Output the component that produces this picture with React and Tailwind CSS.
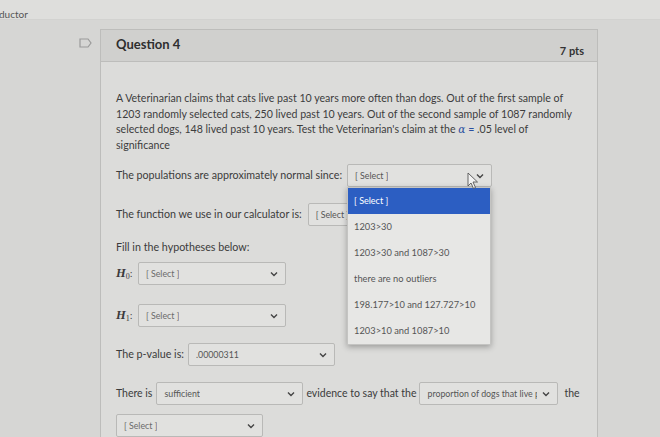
import React from 'react';

const Chevron = () => (
    <svg width="8" height="6" viewBox="0 0 8 6" className="shrink-0">
        <path d="M1 1.5 L4 4.5 L7 1.5" fill="none" stroke="#444" strokeWidth="1.4" />
    </svg>
);

function Select({ value, width, dim, children }) {
    return (
        <div
            className={`relative shrink-0 flex items-center justify-between h-[23px] px-[7px] rounded-[2px] border border-[#b9b9b7] bg-[#e1e1df] ${width}`}
        >
            <span className={`min-w-0 mr-[5px] text-[8.8px] whitespace-nowrap overflow-hidden ${dim ? 'text-[#6a6a6a]' : 'text-[#555]'}`}>{value}</span>
            <Chevron />
            {children}
        </div>
    );
}

const options = [
    '1203>30',
    '1203>30 and 1087>30',
    'there are no outliers',
    '198.177>10 and 127.727>10',
    '1203>10 and 1087>10',
];

function H({ sub }) {
    return (
        <span className="w-[22px] text-[12.5px] text-[#3a3a3a] font-bold italic" style={{ fontFamily: '"Liberation Serif", serif' }}>
            H<sub className="text-[8px] not-italic font-normal">{sub}</sub>
            <span className="not-italic font-normal text-[10px]">:</span>
        </span>
    );
}

export default function App() {
    return (
        <div className="relative w-[660px] h-[437px] overflow-hidden bg-[#d6d6d4] text-[#3b3b3b]" style={{ fontFamily: 'Lato, "Open Sans", sans-serif' }}>
            <div className="h-[20px] bg-[#dededc] border-b border-[#d2d2d0] -ml-[1px]">
                <span className="text-[10px] leading-[12px] text-[#555]">ductor</span>
            </div>

            <div className="flex mt-[9px]">
                <div className="w-[100px] flex justify-end pr-[8px] pt-[9px]">
                    <svg width="13" height="10" viewBox="0 0 13 10">
                        <path d="M1 1 H9 L12 5 L9 9 H1 Z" fill="none" stroke="#9a9a9a" strokeWidth="1.2" />
                    </svg>
                </div>

                <div className="w-[498px] border border-[#bdbdbb] bg-[#dcdcda] h-[420px]">
                    <div className="h-[32px] bg-[#d0d0ce] border-b border-[#bdbdbb] flex justify-between px-[15px]">
                        <span className="text-[13px] font-bold text-[#2e2e2e] mt-[5px]">Question 4</span>
                        <span className="text-[11px] font-bold text-[#333] mt-[13px] mr-[-2px]">7 pts</span>
                    </div>

                    <div className="px-[15px] pt-[29px]">
                        <p className="text-[10.6px] leading-[15.5px] text-[#3d3d3d] whitespace-nowrap">
                            A Veterinarian claims that cats live past 10 years more often than dogs. Out of the first sample of
                            <br />
                            1203 randomly selected cats, 250 lived past 10 years. Out of the second sample of 1087 randomly
                            <br />
                            selected dogs, 148 lived past 10 years. Test the Veterinarian's claim at the{' '}
                            <span className="italic text-[#2a4fa0]" style={{ fontFamily: '"DejaVu Serif", serif' }}>α</span>{' '}
                            <span className="text-[#2a4fa0]">=</span> .05 level of
                            <br />
                            significance
                        </p>

                        <div className="flex items-center gap-[5px] mt-[11px] text-[10.7px] whitespace-nowrap">
                            <span>The populations are approximately normal since:</span>
                            <Select value="[ Select ]" width="w-[145px]">
                                <div className="absolute left-[-1px] top-[22px] w-[144px] bg-[#e7e7e5] border border-[#c4c4c2] shadow-[0_2px_6px_rgba(0,0,0,0.3)] z-10">
                                    <div className="h-[26px] flex items-center px-[6px] bg-[#2c5ec2] text-white text-[9px]">[ Select ]</div>
                                    {options.map((o) => (
                                        <div key={o} className="h-[26px] flex items-center px-[6px] text-[9.3px] text-[#555]">{o}</div>
                                    ))}
                                </div>
                                <svg className="absolute left-[119px] top-[7px] z-20" width="12" height="18" viewBox="0 0 12 18">
                                    <path d="M1 1 L1 14 L4 11 L6.5 16.5 L8.5 15.5 L6 10 L10.5 10 Z" fill="#f2f2f2" stroke="#555" strokeWidth="0.9" />
                                </svg>
                            </Select>
                        </div>

                        <div className="flex items-center gap-[6px] mt-[16px] text-[10.7px] whitespace-nowrap">
                            <span>The function we use in our calculator is:</span>
                            <Select value="[ Select ]" width="w-[145px]" />
                        </div>

                        <div className="mt-[13px] text-[10.7px] leading-[15px]">Fill in the hypotheses below:</div>

                        <div className="flex items-center mt-[8px]">
                            <H sub="0" />
                            <Select value="[ Select ]" width="w-[148px]" dim />
                        </div>

                        <div className="flex items-center mt-[19px]">
                            <H sub="1" />
                            <Select value="[ Select ]" width="w-[148px]" dim />
                        </div>

                        <div className="flex items-center gap-[4px] mt-[16px] text-[10.7px]">
                            <span>The p-value is:</span>
                            <Select value=".00000311" width="w-[147px]" />
                        </div>

                        <div className="flex items-center mt-[16px] text-[10.5px] whitespace-nowrap">
                            <span className="mr-[4px]">There is</span>
                            <Select value="sufficient" width="w-[147px]" />
                            <span className="ml-[3px] mr-[3px]">evidence to say that the</span>
                            <Select value="proportion of dogs that live p" width="w-[139px]" />
                            <span className="ml-[6px]">the</span>
                        </div>

                        <div className="flex items-center mt-[9px]">
                            <Select value="[ Select ]" width="w-[147px]" dim />
                        </div>
                    </div>
                </div>
            </div>
        </div>
    );
}
